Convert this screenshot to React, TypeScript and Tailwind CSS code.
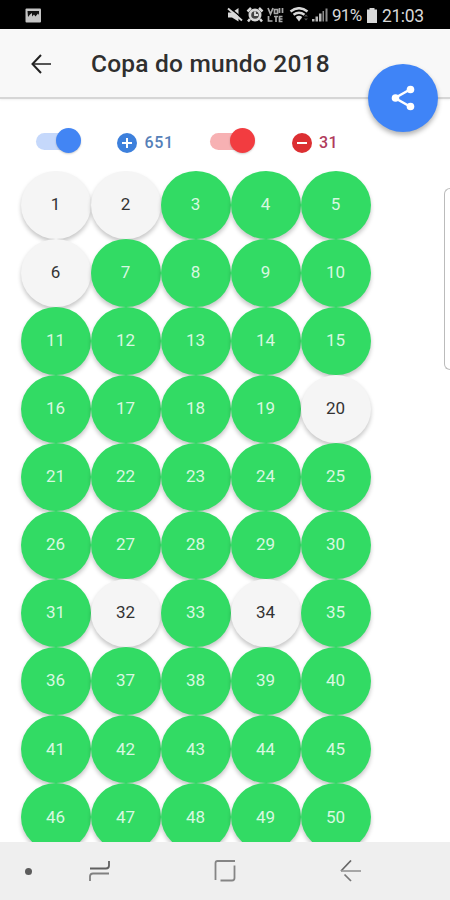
import clsx from 'clsx';

const MISSING = [1, 2, 6, 20, 32, 34];
const STICKERS = Array.from({ length: 50 }, (_, i) => i + 1);

function StatusBar() {
  return (
    <div className="h-[29px] shrink-0 bg-black text-[#d8d8d8] flex items-center relative">
      <svg className="ml-[25px] mt-px" width="17" height="15" viewBox="0 0 17 15">
        <rect x="0.5" y="0.5" width="15.5" height="14" rx="1" fill="#c4c4c4" />
        <path d="M2.5 3h11.5v4l-1-1.5-2.5 3-1.500-2-2 2V5L5 6.500 3 9z" fill="#111" />
      </svg>

      <svg className="ml-[185px] mt-px" width="102" height="16" viewBox="0 0 102 16" fill="#d8d8d8">
        {/* Muted speaker */}
        <path d="M1 5.500h4L11.500 1v13.500L5 10.500H1z" />
        <path d="M2.500 0.500l13 11" stroke="#000" strokeWidth="1.500" />
        <path d="M1 1.500l14 12" stroke="#d8d8d8" strokeWidth="2" />
        {/* Alarm */}
        <circle cx="28" cy="8" r="6.500" />
        <path d="M20.500 4.500L24 1M35.500 4.500L32 1M23 12l-2 2.500M33 12l2 2.500" stroke="#d8d8d8" strokeWidth="2.500" />
        <circle cx="28" cy="8" r="3.800" fill="#444" />
        <path d="M28 4.500V8h3" fill="none" stroke="#e0e0e0" strokeWidth="1.800" />
        {/* VoLTE */}
        <path
          d="M41 1l2.500 6L46 1M47.500 2.500h3v4h-3zM52.500 1v5M55.500 1v5M41.500 9v5h4M47 9.500h4M49 9.500V15M55.500 9.500h-3v5h3M52.500 12h3"
          fill="none" stroke="#aaa" strokeWidth="1.700"
        />
        {/* Wifi */}
        <path d="M63.500 4.500q8.500-6.500 17 0M66.500 7.800q5.500-4 11 0M69.500 11q2.500-2 5 0" fill="none" stroke="#d8d8d8" strokeWidth="2.500" />
        <path d="M69.500 11h5L72 14.500z" />
        <path d="M77 9.500l2-2 2 2zM77 11.500l2 2 2-2z" fill="#555" />
        {/* Signal */}
        <path d="M85 12h2.500v2.500H85zM88.500 9.500H91v5h-2.500zM92 6.500h2.500v8H92z" fill="#b8b8b8" />
        <path d="M95.500 4H97v10.500h-1.500zM98.500 1.500h2v13h-2z" fill="#8d8d8d" />
      </svg>
      <span className="ml-[3px] mt-[3px] text-[17px] tracking-[-0.700px] w-[32px] whitespace-nowrap">91%</span>
      <svg className="ml-[2px] mt-px" width="12" height="15" viewBox="0 0 12 15" fill="#d8d8d8">
        <path d="M3.500 0h5v1.500H11V15H1V1.500h2.500z" />
      </svg>
      <span className="ml-[4px] mt-[3px] text-[17.500px] tracking-[-0.400px] whitespace-nowrap">21:03</span>
    </div>
  );
}

function ShareButton() {
  return (
    <button
      aria-label="Compartilhar"
      className="absolute left-[368px] top-[63.500px] z-10 w-[70px] h-[68px] rounded-[50%] bg-[#3f84f7] flex items-center justify-center shadow-[0_3px_5px_rgba(0,0,0,0.300)]"
    >
      <svg width="26" height="28" viewBox="0 0 26 28" fill="white">
        <path d="M20 5.500L5 14l15 8.500" fill="none" stroke="white" strokeWidth="2.500" />
        <circle cx="20.500" cy="5.500" r="3.800" />
        <circle cx="5.500" cy="14" r="3.800" />
        <circle cx="20.500" cy="22.500" r="3.800" />
      </svg>
    </button>
  );
}

function Toggle({ track, thumb }: { track: string; thumb: string }) {
  return (
    <div className="w-[45px] h-[26px] flex items-center relative">
      <div className={clsx('w-[36px] h-[17px] rounded-full', track)} />
      <div className={clsx('absolute right-0 top-0 size-[25px] rounded-full shadow-[0_1px_2px_rgba(0,0,0,0.200)]', thumb)} />
    </div>
  );
}

function Filters() {
  return (
    <div className="h-[72px] shrink-0 flex items-start pl-[35.500px] pt-[29px]">
      <Toggle track="bg-[#c5d8fb]" thumb="bg-[#4285f4]" />
      <div className="ml-[36px] mt-[5px] w-[93px] flex items-center text-[#5580b8]">
        <svg width="20" height="20" viewBox="0 0 20 20">
          <circle cx="10" cy="10" r="10" fill="#3d80dc" />
          <path d="M10 5v10M5 10h10" stroke="white" strokeWidth="2" />
        </svg>
        <span className="ml-[8px] text-[16px] leading-5 font-medium tracking-[0.600px]">651</span>
      </div>
      <Toggle track="bg-[#f7b1b3]" thumb="bg-[#f23c40]" />
      <div className="ml-[37.500px] mt-[5px] flex items-center text-[#b13b5c]">
        <svg width="20" height="20" viewBox="0 0 20 20">
          <circle cx="10" cy="10" r="10" fill="#dc2f32" />
          <path d="M5 10h10" stroke="white" strokeWidth="2" />
        </svg>
        <span className="ml-[7px] text-[16px] leading-5 font-medium tracking-[0.300px]">31</span>
      </div>
    </div>
  );
}

function NavBar() {
  return (
    <div className="h-[58px] shrink-0 bg-[#efefef] flex items-center">
      <div className="ml-[25px] size-[7px] rounded-full bg-[#5c5c5c]" />
      <svg className="ml-[57px]" width="22" height="22" viewBox="0 0 22 22" fill="none" strokeWidth="1.800">
        <path d="M1 8.500h16q3 0 3-3V1" stroke="#606060" />
        <path d="M20 13.500H4q-3 0-3 3V21" stroke="#808080" />
      </svg>
      <svg className="ml-[103px]" width="22" height="22" viewBox="0 0 22 22" fill="none" stroke="#858585" strokeWidth="1.800">
        <path d="M1.500 20V3q0-2 2-2H21M20.500 5.500V18q0 2.500-2.500 2.500H6.500" />
      </svg>
      <svg className="ml-[104px]" width="22" height="22" viewBox="0 0 22 22" fill="none" strokeWidth="1.700">
        <path d="M11 .5L1 11" stroke="#666" />
        <path d="M1 11h20" stroke="#999" />
        <path d="M4.500 14.500l6.500 6.500" stroke="#777" />
      </svg>
    </div>
  );
}

export default function App() {
  return (
    <div className="relative w-[450px] h-[900px] overflow-hidden bg-white flex flex-col font-[Roboto,sans-serif]">
      <StatusBar />

      {/* Toolbar */}
      <header className="h-[70px] shrink-0 bg-[#f8f8f8] border-b-2 border-[#d6d6d6] flex items-center shadow-[0_1px_2px_rgba(0,0,0,0.060)]">
        <svg className="ml-[31px] mt-[2px]" width="21" height="20" viewBox="0 0 21 20" fill="none" strokeWidth="2">
          <path d="M1.500 10H20" stroke="#555" />
          <path d="M10 1L1.500 10l8.500 9" stroke="#222" />
        </svg>
        <h1 className="ml-[39px] mt-[3px] text-[24.500px] font-medium tracking-[0.220px] text-[#2f2f2f] whitespace-nowrap">
          Copa do mundo 2018
        </h1>
      </header>
      <ShareButton />

      <Filters />

      {/* Stickers */}
      <main className="flex-1 min-h-0 overflow-hidden flex">
        <div className="ml-[20.500px] -mt-[0.500px] grid grid-cols-[repeat(5,70px)] auto-rows-[68.100px]">
          {STICKERS.map((n) => (
            <div
              key={n}
              className={clsx(
                'rounded-[50%] flex items-center justify-center text-[17px] shadow-[0_3px_4px_rgba(0,0,0,0.220)]',
                MISSING.includes(n) ? 'bg-[#f5f5f5] text-[#333]' : 'bg-[#32db64] text-[#d8f8e0]'
              )}
            >
              {n}
            </div>
          ))}
        </div>
        {/* Edge panel handle */}
        <div className="ml-auto mt-[17px] w-[6px] h-[182px] rounded-l-[8px] border border-r-0 border-[#bbb]" />
      </main>

      <NavBar />
    </div>
  );
}
